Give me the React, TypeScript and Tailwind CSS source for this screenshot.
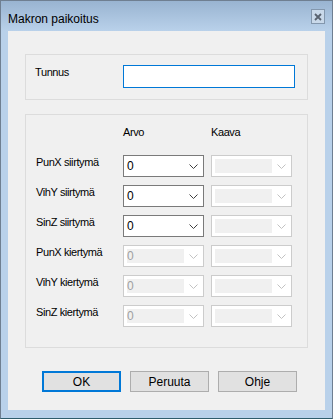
import React from 'react'

const rows = [
  { label: 'PunX siirtymä', enabled: true },
  { label: 'VihY siirtymä', enabled: true },
  { label: 'SinZ siirtymä', enabled: true },
  { label: 'PunX kiertymä', enabled: false },
  { label: 'VihY kiertymä', enabled: false },
  { label: 'SinZ kiertymä', enabled: false },
]

function Chevron({ disabled }: { disabled?: boolean }) {
  return (
    <svg width="9" height="5" viewBox="0 0 9 5" className="shrink-0">
      <path
        d="M0.5 0.5 L4.5 4.5 L8.5 0.5"
        fill="none"
        stroke={disabled ? '#c2c2c2' : '#404040'}
        strokeWidth="1"
      />
    </svg>
  )
}

function Combo({ value, enabled }: { value?: string; enabled: boolean }) {
  if (enabled) {
    return (
      <div className="w-[81px] h-[22px] border border-[#7a7a7a] bg-white flex items-center justify-between pl-[3px] pr-[5px]">
        <span className="text-[12px] leading-[14px] text-black">{value}</span>
        <Chevron />
      </div>
    )
  }
  return (
    <div className="w-[81px] h-[22px] border border-[#cccccc] bg-white flex items-center justify-between pl-[3px] pr-[5px]">
      <div className="w-[57px] h-[14px] bg-[#f0f0f0] flex items-center">
        <span className="text-[12px] leading-[14px] text-[#a0a0a0]">{value}</span>
      </div>
      <Chevron disabled />
    </div>
  )
}

export default function App() {
  return (
    <div className="w-[333px] h-[419px] flex flex-col border border-[#6f7f91] border-b-[#2f5c6c] bg-[linear-gradient(180deg,#99b4d1_0px,#b9d1ea_30px)] font-['Liberation_Sans',Arial,sans-serif] text-black">
      {/* Title bar */}
      <div className="h-[30px] shrink-0 flex items-start justify-between pl-[7px] pr-[7px] pt-[8px]">
        <span className="mt-[3px] text-[12px] leading-[15px]">Makron paikoitus</span>
        <div className="w-[14px] h-[15px] border border-[#8397ad] bg-[#c9d9ea] flex items-center justify-center">
          <svg width="8" height="8" viewBox="0 0 8 8">
            <path d="M1 1 L7 7 M7 1 L1 7" stroke="#58626f" strokeWidth="1.8" />
          </svg>
        </div>
      </div>

      {/* Client area */}
      <div className="mx-[7px] h-[379px] shrink-0 bg-[#f0f0f0] flex flex-col tracking-[-0.4px]">
        <div className="mt-[23px] ml-[17px] w-[283px] h-[46px] border border-[#dcdcdc] flex items-start pt-[10px] pl-[9px]">
          <span className="w-[88px] mt-[1px] text-[11px] leading-[13px]">Tunnus</span>
          <div className="w-[172px] h-[23px] border border-[#0078d7] bg-white" />
        </div>

        <div className="mt-[14px] ml-[17px] w-[283px] h-[234px] border border-[#dcdcdc] flex flex-col pt-[11px] pl-[10px]">
          <div className="flex text-[11px] leading-[13px]">
            <span className="ml-[87px] w-[88px]">Arvo</span>
            <span>Kaava</span>
          </div>
          <div className="mt-[16px] flex flex-col gap-[8px]">
            {rows.map((r) => (
              <div key={r.label} className="flex items-start h-[22px]">
                <span className="w-[87px] pt-[1px] text-[11px] leading-[13px]">{r.label}</span>
                <Combo value="0" enabled={r.enabled} />
                <div className="ml-[7px]">
                  <Combo enabled={false} />
                </div>
              </div>
            ))}
          </div>
        </div>

        <div className="mt-[23px] ml-[34px] flex gap-[9px] tracking-normal">
          <button className="w-[79px] h-[21px] border-2 border-[#0078d7] bg-[#e1e1e1] text-[12px] leading-[14px]">
            OK
          </button>
          <button className="w-[79px] h-[21px] border border-[#adadad] bg-[#e1e1e1] text-[12px] leading-[14px]">
            Peruuta
          </button>
          <button className="w-[79px] h-[21px] border border-[#adadad] bg-[#e1e1e1] text-[12px] leading-[14px]">
            Ohje
          </button>
        </div>
      </div>
    </div>
  )
}
